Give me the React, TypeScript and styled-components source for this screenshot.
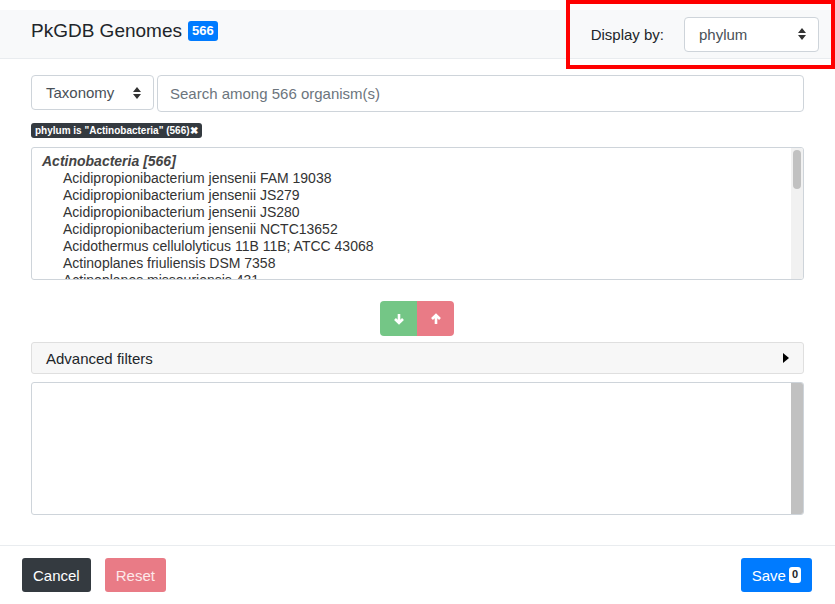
import * as React from 'react'
import styled, { createGlobalStyle } from 'styled-components'

const Global = createGlobalStyle`
  body { margin: 0; font-family: "Liberation Sans", Arial, sans-serif; color: #212529; background: #fff; }
`

const Page = styled.div`
  width: 835px;
  height: 604px;
  padding-top: 10px;
  box-sizing: border-box;
  display: flex;
  flex-direction: column;
  position: relative;
`

const Header = styled.div`
  height: 49px;
  background: #f8f9fa;
  border-bottom: 1px solid #e9ecef;
  display: flex;
  align-items: center;
  padding: 0 16px 0 31px;
  box-sizing: border-box;
`

const Title = styled.div`
  font-size: 19px;
  flex: 1;
  display: flex;
  align-items: center;
  gap: 6px;
  margin-top: -6px;
`

const Badge = styled.span<{ $light?: boolean }>`
  background: ${p => (p.$light ? '#fff' : '#007bff')};
  color: ${p => (p.$light ? '#212529' : '#fff')};
  font-size: ${p => (p.$light ? '11px' : '13px')};
  font-weight: bold;
  border-radius: 3px;
  padding: ${p => (p.$light ? '1px 3px' : '2px 4px')};
  line-height: 1.2;
`

const Highlight = styled.div`
  position: absolute;
  top: 0;
  right: 0;
  width: 269px;
  height: 69px;
  border: 4px solid #ff0000;
  box-sizing: border-box;
  pointer-events: none;
`

const DisplayBy = styled.div`
  display: flex;
  align-items: center;
  gap: 20px;
  font-size: 15px;
  margin-left: 0;
  padding-left: 3px;
`

const Select = styled.div<{ $w: number }>`
  width: ${p => p.$w}px;
  height: 35px;
  border: 1px solid #ced4da;
  border-radius: 4px;
  background: #fff;
  display: flex;
  align-items: center;
  justify-content: space-between;
  padding: 0 12px 0 14px;
  box-sizing: border-box;
  font-size: 15px;
  color: #495057;
`

const Carets = () => (
  <svg width="8" height="12" viewBox="0 0 8 12">
    <path d="M0 5 L4 0 L8 5Z M0 7 L4 12 L8 7Z" fill="#333" />
  </svg>
)

const Body = styled.div`
  flex: 1;
  padding: 16px 31px 0 31px;
  display: flex;
  flex-direction: column;
`

const SearchRow = styled.div`
  display: flex;
  gap: 3px;
`

const Search = styled.div`
  flex: 1;
  height: 35px;
  border: 1px solid #ced4da;
  border-radius: 4px;
  display: flex;
  align-items: center;
  padding-left: 12px;
  font-size: 15px;
  color: #6c757d;
`

const Tag = styled.span`
  align-self: flex-start;
  margin-top: 11px;
  background: #343a40;
  color: #fff;
  font-size: 10px;
  font-weight: bold;
  border-radius: 3px;
  padding: 2px 4px;
`

const ListBox = styled.div<{ $mt: number }>`
  margin-top: ${p => p.$mt}px;
  height: 133px;
  border: 1px solid #ced4da;
  border-radius: 3px;
  display: flex;
  overflow: hidden;
  box-sizing: border-box;
`

const ListContent = styled.div`
  flex: 1;
  padding: 5px 10px;
  font-size: 14px;
  line-height: 17px;
  color: #333;
`

const Group = styled.div`
  font-weight: bold;
  font-style: italic;
  color: #444;
`

const Item = styled.div`
  padding-left: 21px;
  white-space: nowrap;
`

const Scrollbar = styled.div<{ $thumb?: boolean }>`
  width: 12px;
  background: ${p => (p.$thumb ? '#f1f1f1' : '#c1c1c1')};
  position: relative;
  &::after {
    content: '';
    display: ${p => (p.$thumb ? 'block' : 'none')};
    position: absolute;
    left: 2px;
    right: 2px;
    top: 2px;
    height: 39px;
    border-radius: 4px;
    background: #c1c1c1;
  }
`

const MoveRow = styled.div`
  margin-top: 21px;
  display: flex;
  justify-content: center;
  padding-right: 1px;
`

const MoveBtn = styled.div<{ $color: string; $side: 'l' | 'r' }>`
  width: 37px;
  height: 35px;
  background: ${p => p.$color};
  border-radius: ${p => (p.$side === 'l' ? '4px 0 0 4px' : '0 4px 4px 0')};
  display: flex;
  align-items: center;
  justify-content: center;
`

const Arrow = ({ up }: { up?: boolean }) => (
  <svg width="12" height="12" viewBox="0 0 12 12" style={{ transform: up ? 'rotate(180deg)' : undefined }}>
    <path d="M6 1 V10 M2 6 L6 10 L10 6" stroke="#fff" strokeWidth="2.6" fill="none" />
  </svg>
)

const Filters = styled.div`
  margin-top: 6px;
  height: 32px;
  background: #f7f7f7;
  border: 1px solid #dfdfdf;
  border-radius: 3px;
  display: flex;
  align-items: center;
  justify-content: space-between;
  padding: 0 14px;
  font-size: 15px;
  box-sizing: border-box;
`

const Footer = styled.div`
  height: 58px;
  border-top: 1px solid #e9ecef;
  display: flex;
  align-items: center;
  padding: 0 23px 0 22px;
  gap: 14px;
`

const Btn = styled.div<{ $bg: string; $fg?: string }>`
  height: 34px;
  padding: 0 11px;
  background: ${p => p.$bg};
  color: ${p => p.$fg ?? '#fff'};
  border-radius: 3px;
  display: flex;
  align-items: center;
  gap: 3px;
  font-size: 15px;
`

const Spacer = styled.div`
  flex: 1;
`

export default function App() {
  const items = [
    'Acidipropionibacterium jensenii FAM 19038',
    'Acidipropionibacterium jensenii JS279',
    'Acidipropionibacterium jensenii JS280',
    'Acidipropionibacterium jensenii NCTC13652',
    'Acidothermus cellulolyticus 11B 11B; ATCC 43068',
    'Actinoplanes friuliensis DSM 7358',
    'Actinoplanes missouriensis 431',
  ]
  return (
    <Page>
      <Global />
      <Header>
        <Title>
          PkGDB Genomes <Badge>566</Badge>
        </Title>
        <DisplayBy>
          Display by:
          <Select $w={135}>
            phylum <Carets />
          </Select>
        </DisplayBy>
      </Header>
      <Highlight />
      <Body>
        <SearchRow>
          <Select $w={123}>
            Taxonomy <Carets />
          </Select>
          <Search>Search among 566 organism(s)</Search>
        </SearchRow>
        <Tag>phylum is "Actinobacteria" (566)✖</Tag>
        <ListBox $mt={9}>
          <ListContent>
            <Group>Actinobacteria [566]</Group>
            {items.map(i => (
              <Item key={i}>{i}</Item>
            ))}
          </ListContent>
          <Scrollbar $thumb />
        </ListBox>
        <MoveRow>
          <MoveBtn $color="#74c686" $side="l">
            <Arrow />
          </MoveBtn>
          <MoveBtn $color="#e97b86" $side="r">
            <Arrow up />
          </MoveBtn>
        </MoveRow>
        <Filters>
          Advanced filters
          <svg width="6" height="10" viewBox="0 0 6 10">
            <path d="M0 0 L6 5 L0 10Z" fill="#000" />
          </svg>
        </Filters>
        <ListBox $mt={8}>
          <ListContent />
          <Scrollbar />
        </ListBox>
      </Body>
      <Footer>
        <Btn $bg="#343a40">Cancel</Btn>
        <Btn $bg="#e97b86" $fg="#fde8ea">Reset</Btn>
        <Spacer />
        <Btn $bg="#007bff">
          Save <Badge $light>0</Badge>
        </Btn>
      </Footer>
    </Page>
  )
}
